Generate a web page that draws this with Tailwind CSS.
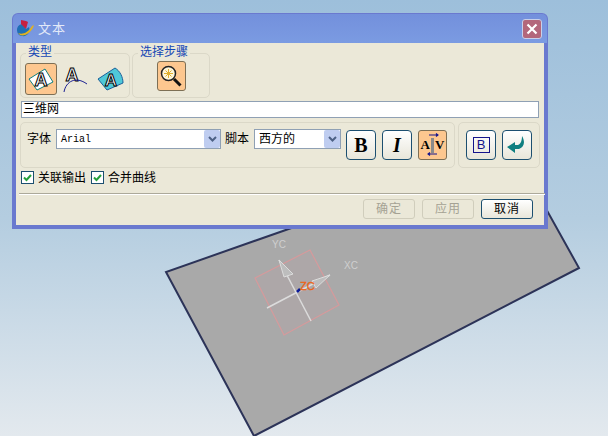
<!DOCTYPE html>
<html lang="zh">
<head>
  <meta charset="UTF-8">
  <title>文本</title>
  <script src="https://cdn.jsdelivr.net/npm/@tailwindcss/browser@4"></script>
</head>
<body class="m-0 overflow-hidden">
<div class="relative w-[608px] h-[436px] overflow-hidden bg-gradient-to-b from-[#9dbfdb] via-[#b4cde0] to-[#e3e9ee] font-['Liberation_Sans','Noto_Sans_CJK_SC',sans-serif] text-[12px] text-black">

  <!-- sheet in the viewport -->
  <svg class="absolute inset-0" width="608" height="436" viewBox="0 0 608 436">
    <polygon points="166,272 254,436 579,268 530,180 300,225" fill="#a9a9a9" stroke="#2c3358" stroke-width="2"/>
    <polygon points="255,278 310,250 339,305 284,335" fill="#b5a4a6" fill-opacity=".35" stroke="#d69a9c" stroke-width="1.2"/>
    <g stroke="#dcdcdc" stroke-width="1.5" fill="none">
      <line x1="267" y1="308" x2="330" y2="275"/>
      <line x1="279" y1="260" x2="311" y2="321"/>
      <path d="M279 260 L284 277 L293 274 Z" fill="#bdbdbd" stroke-width="1"/>
      <path d="M330 275 L312 281 L316 288 Z" fill="#bdbdbd" stroke-width="1"/>
    </g>
    <line x1="297" y1="292" x2="300" y2="289" stroke="#0a1a9a" stroke-width="2.5"/>
    <text x="272" y="248" font-size="10" fill="#cfcfcf" font-family="Liberation Sans">YC</text>
    <text x="344" y="269" font-size="10" fill="#cfcfcf" font-family="Liberation Sans">XC</text>
    <text x="300" y="290" font-size="11" fill="#ee6414" stroke="#ee6414" stroke-width=".3" font-family="Liberation Sans">ZC</text>
  </svg>

  <!-- dialog window -->
  <div class="absolute left-[12px] top-[13px] w-[536px] h-[216px] flex flex-col rounded-t-[6px] bg-[#6a79cf] px-[4px] pb-[4px] pt-[1px]">
    <div class="h-[29px] shrink-0 -mx-[3px] px-[3px] flex items-center gap-[3px] rounded-t-[5px] bg-gradient-to-b from-[#7390dc] to-[#7b9be2]">
      <svg width="19" height="19" viewBox="0 0 19 19" class="shrink-0">
        <path d="M1 11c0-4 3-6 6-6l3 5 3-2c2 5-2 10-7 9-3 0-5-3-5-6z" fill="#1f6fb5"/>
        <path d="M2 14c4 2 10 0 14-7l2-1c-2 7-9 12-14 10z" fill="#e2b21f"/>
        <path d="M5 1l5 1 2 1-2 7-5-5z" fill="#c8203f"/>
      </svg>
      <span class="text-[13px] text-[#e3e9f8] tracking-[1px]">文本</span>
      <div class="ml-auto mr-[2px] w-[20px] h-[20px] rounded-[3px] border border-[#c8d0ea] bg-[#b3677b] flex items-center justify-center">
        <svg width="12" height="12" viewBox="0 0 12 12"><path d="M1.500 1.500l9 9M10.500 1.500l-9 9" stroke="#fff" stroke-width="2.200"/></svg>
      </div>
    </div>

    <div class="flex-1 bg-[#ebe8d8] flex flex-col pt-[2px] px-[4px]">
      <!-- type + steps -->
      <div class="flex gap-[2px] h-[53px] items-end">
        <div class="relative w-[110px] h-[45px] rounded-[5px] border border-[#dbd8c8] flex items-center pl-[4px] pt-[6px]">
          <span class="absolute left-[5px] -top-[9px] px-[2px] bg-[#ebe8d8] text-[#1446b4] leading-[14px]">类型</span>
          <div class="w-[32px] h-[32px] rounded-[3px] border border-[#7d6f55] bg-[#fdc78f] flex items-center justify-center">
            <svg width="28" height="28" viewBox="0 0 28 28">
              <polygon points="2,14 18,4 26,17 10,25" fill="#fff" stroke="#0f7f80" stroke-width="1"/>
              <text x="14" y="21" text-anchor="middle" font-size="18" font-weight="bold" fill="#fff" stroke="#000" stroke-width="1" font-family="Liberation Sans">A</text>
            </svg>
          </div>
          <svg width="26" height="30" viewBox="0 0 26 30" class="ml-[6px]">
            <text x="9" y="17" text-anchor="middle" font-size="18" font-weight="bold" fill="#fff" stroke="#000" stroke-width="1" font-family="Liberation Sans">A</text>
            <path d="M1 28C3 17 13 12 24 20" fill="none" stroke="#1b1f92" stroke-width="1"/>
          </svg>
          <svg width="28" height="28" viewBox="0 0 28 28" class="ml-[8px]">
            <path d="M1 14L18 3c5 3 8 9 8 15L10 25z" fill="#4fc8d8" stroke="#1b5f9a" stroke-width="1"/>
            <text x="14" y="21" text-anchor="middle" font-size="17" font-weight="bold" fill="#fff" stroke="#000" stroke-width="1" font-family="Liberation Sans">A</text>
          </svg>
        </div>
        <div class="relative w-[78px] h-[45px] rounded-[5px] border border-[#dbd8c8] flex items-center justify-center">
          <span class="absolute left-[5px] -top-[9px] px-[2px] bg-[#ebe8d8] text-[#1446b4] leading-[14px] whitespace-nowrap">选择步骤</span>
          <div class="w-[29px] h-[30px] rounded-[3px] border border-[#7d6f55] bg-[#fdc78f] flex items-center justify-center">
            <svg width="24" height="24" viewBox="0 0 24 24">
              <circle cx="9.500" cy="9.500" r="7" fill="#fff6d8" stroke="#222" stroke-width="1.500"/>
              <path d="M9.500 5v9M5 9.500h9M6.500 6.500l6 6M12.500 6.500l-6 6" stroke="#e0b030" stroke-width="1"/>
              <path d="M15 15l6.500 6.500" stroke="#111" stroke-width="3"/>
            </svg>
          </div>
        </div>
      </div>

      <!-- text input -->
      <div class="mt-[3px] ml-[1px] w-[518px] h-[17px] bg-white border border-[#8fa0b4] pl-[1px] leading-[15px] text-[12px]">三维网</div>

      <!-- font row -->
      <div class="mt-[4px] flex gap-[3px] h-[46px]">
        <div class="w-[435px] rounded-[5px] border border-[#dbd8c8] flex items-start pl-[6px] pt-[6px]">
          <span class="leading-[20px] w-[29px]">字体</span>
          <div class="w-[165px] h-[20px] bg-white border border-[#8fa0b4] flex items-center justify-between pl-[4px] font-['Liberation_Mono',monospace] text-[10px]">
            Arial
            <div class="w-[16px] h-[18px] bg-[#bfcdf0] flex items-center justify-center rounded-[2px]">
              <svg width="9" height="7" viewBox="0 0 9 7"><path d="M1 1l3.500 3.500L8 1" fill="none" stroke="#4d6185" stroke-width="2"/></svg>
            </div>
          </div>
          <span class="leading-[20px] ml-[4px] w-[29px]">脚本</span>
          <div class="w-[87px] h-[20px] bg-white border border-[#8fa0b4] flex items-center justify-between pl-[4px]">
            西方的
            <div class="w-[16px] h-[18px] bg-[#bfcdf0] flex items-center justify-center rounded-[2px]">
              <svg width="9" height="7" viewBox="0 0 9 7"><path d="M1 1l3.500 3.500L8 1" fill="none" stroke="#4d6185" stroke-width="2"/></svg>
            </div>
          </div>
          <div class="ml-[5px] flex gap-[6px] pt-[1px]">
            <div class="w-[30px] h-[30px] rounded-[4px] border border-[#1c4f70] bg-gradient-to-b from-white to-[#e8e6da] flex items-center justify-center font-['Liberation_Serif',serif] font-bold text-[20px]">B</div>
            <div class="w-[30px] h-[30px] rounded-[4px] border border-[#1c4f70] bg-gradient-to-b from-white to-[#e8e6da] flex items-center justify-center font-['Liberation_Serif',serif] italic font-bold text-[20px]">I</div>
            <div class="relative w-[29px] h-[30px] rounded-[3px] border border-[#7d6f55] bg-[#fdc78f] flex items-center justify-center font-['Liberation_Serif',serif] font-bold text-[13px]">
              <span>A</span><span class="w-[3px] h-[15px] bg-[#8a8a8a] mx-[1px]"></span><span>V</span>
              <svg class="absolute inset-0" width="27" height="28" viewBox="0 0 27 28">
                <path d="M10 4h9M17 2.500l2 1.500-2 1.500M18 23H9M11 21.500L9 23l2 1.500" fill="none" stroke="#14148c" stroke-width="1.100"/>
              </svg>
            </div>
          </div>
        </div>
        <div class="w-[82px] rounded-[5px] border border-[#dbd8c8] flex items-start gap-[6px] pl-[7px] pt-[7px]">
          <div class="w-[30px] h-[30px] rounded-[4px] border border-[#1c4f70] bg-gradient-to-b from-white to-[#e8e6da] flex items-center justify-center">
            <span class="w-[17px] h-[16px] border border-[#14148c] text-[#14148c] text-[13px] leading-[14px] text-center">B</span>
          </div>
          <div class="w-[30px] h-[30px] rounded-[4px] border border-[#1c4f70] bg-gradient-to-b from-white to-[#e8e6da] flex items-center justify-center">
            <svg width="22" height="22" viewBox="0 0 22 22">
              <path d="M16 2c3 5 3 11-3 13H9v4L1 13l8-5v3h3c3-1 4-5 4-9z" fill="#0f7f80"/>
            </svg>
          </div>
        </div>
      </div>

      <!-- checkboxes -->
      <div class="mt-[2px] ml-[1px] h-[15px] flex items-center">
        <span class="w-[13px] h-[13px] bg-white border border-[#1c4f70] flex items-center justify-center">
          <svg width="9" height="9" viewBox="0 0 9 9"><path d="M1 4.500l2.500 2.500L8 2" fill="none" stroke="#26a03a" stroke-width="2"/></svg>
        </span>
        <span class="ml-[4px] w-[53px]">关联输出</span>
        <span class="w-[13px] h-[13px] bg-white border border-[#1c4f70] flex items-center justify-center">
          <svg width="9" height="9" viewBox="0 0 9 9"><path d="M1 4.500l2.500 2.500L8 2" fill="none" stroke="#26a03a" stroke-width="2"/></svg>
        </span>
        <span class="ml-[4px]">合并曲线</span>
      </div>

      <!-- separator and footer buttons -->
      <div class="mt-[8px] -ml-[1px] w-[526px] h-[1px] bg-[#aca99a] shadow-[0_1px_0_#fff]"></div>
      <div class="mt-[5px] flex gap-[7px] pl-[343px]">
        <div class="w-[52px] h-[20px] rounded-[3px] border border-[#d0cdbc] text-[#a5a294] flex items-center justify-center tracking-[1px]">确定</div>
        <div class="w-[52px] h-[20px] rounded-[3px] border border-[#d0cdbc] text-[#a5a294] flex items-center justify-center tracking-[1px]">应用</div>
        <div class="w-[52px] h-[20px] rounded-[3px] border border-[#1c4f70] bg-gradient-to-b from-white to-[#e8e6da] flex items-center justify-center tracking-[1px]">取消</div>
      </div>
    </div>
  </div>
</div>
</body>
</html>
